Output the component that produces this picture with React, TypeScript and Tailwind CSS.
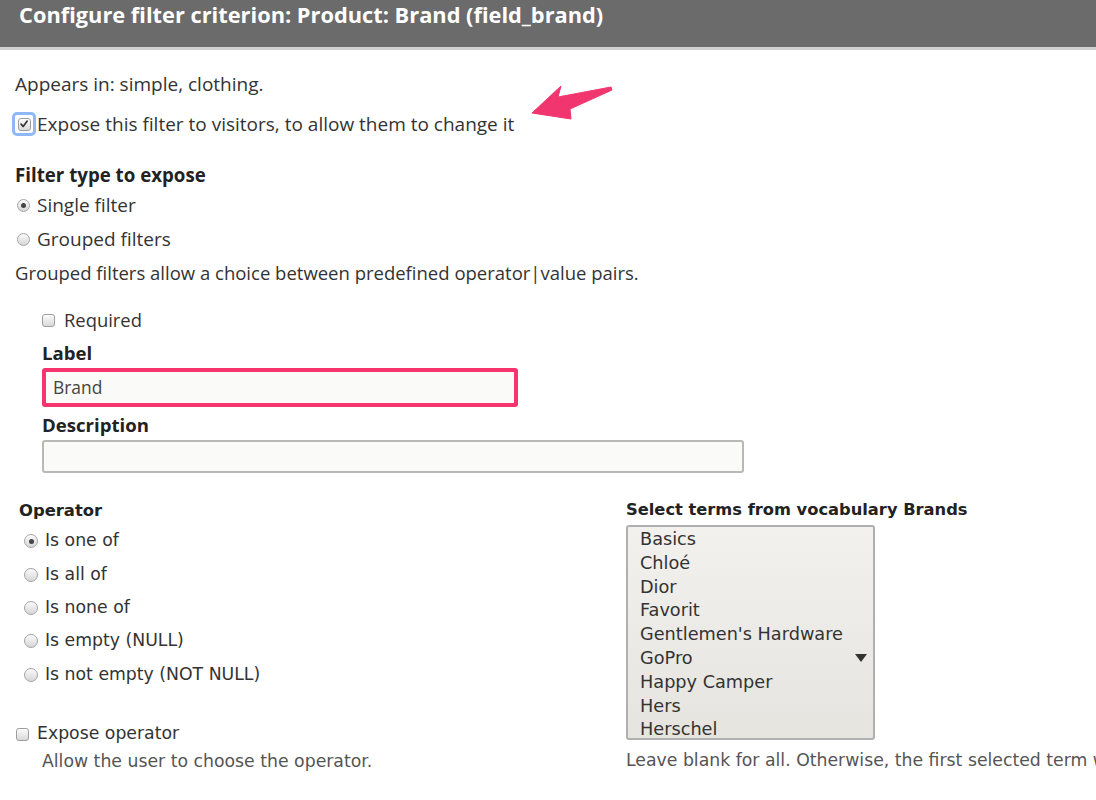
import React from "react";

const top = { fontFamily: '"Open Sans", "Noto Sans", sans-serif' };
const low = { fontFamily: '"DejaVu Sans", "Noto Sans", sans-serif' };

const Checkbox = ({ checked = false }: { checked?: boolean }) => (
  <span className="relative inline-flex h-[13px] w-[13px] shrink-0 items-center justify-center rounded-[3px] border border-[#9d9d9d] bg-gradient-to-b from-[#fbfbfb] to-[#d9d9d9] shadow-[inset_0_1px_0_#fff]">
    {checked && (
      <svg viewBox="0 0 12 12" className="h-[10px] w-[10px]">
        <path d="M2.5 6.2 L5 9 L9.8 2.5" fill="none" stroke="#333" strokeWidth="2" strokeLinecap="round" strokeLinejoin="round" />
      </svg>
    )}
  </span>
);

const Radio = ({ checked = false, big = false }: { checked?: boolean; big?: boolean }) => (
  <span
    className={`inline-flex shrink-0 items-center justify-center rounded-full border border-[#a5a5a5] bg-gradient-to-b from-[#fbfbfb] to-[#d6d6d6] ${
      big ? "h-[14px] w-[14px]" : "h-[13px] w-[13px]"
    }`}
  >
    {checked && <span className="h-[5px] w-[5px] rounded-full bg-[#444]" />}
  </span>
);

const brands = ["Basics", "Chloé", "Dior", "Favorit", "Gentlemen's Hardware", "GoPro", "Happy Camper", "Hers", "Herschel"];

const operators = [
  { label: "Is one of", checked: true, mt: "mt-[6px]" },
  { label: "Is all of", mt: "mt-[10px]" },
  { label: "Is none of", mt: "mt-[9px]" },
  { label: "Is empty (NULL)", mt: "mt-[9px]" },
  { label: "Is not empty (NOT NULL)", mt: "mt-[10px]" },
];

export default function App() {
  return (
    <div className="relative h-[800px] w-[1096px] overflow-hidden bg-white text-[#333]">
      <div className="h-[50px] border-b-[3px] border-[#d0d0d0] bg-[#6b6b6b]">
        <h1 className="px-[19px] text-[21.8px] font-bold leading-[30px] text-white" style={top}>
          Configure filter criterion: Product: Brand (field_brand)
        </h1>
      </div>

      <div className="px-[15px]">
        <div className="mt-[22px] flex h-[24px] items-center text-[19px]" style={top}>
          Appears in: simple, clothing.
        </div>

        <div className="mt-[16px] flex h-[24px] items-center text-[19px]" style={top}>
          <span className="-ml-[3px] mr-[1px] inline-flex h-[24px] w-[24px] items-center justify-center rounded-[5px] border-[3px] border-[#8fb8f4]">
            <Checkbox checked />
          </span>
          Expose this filter to visitors, to allow them to change it
        </div>

        <div className="mt-[27px] flex h-[24px] items-center text-[18.7px] font-bold text-[#222]" style={top}>
          Filter type to expose
        </div>
        <div className="mt-[6px] flex h-[24px] items-center gap-[7px] pl-[2px] text-[19px]" style={top}>
          <Radio checked />
          Single filter
        </div>
        <div className="mt-[10px] flex h-[24px] items-center gap-[7px] pl-[2px] text-[19px]" style={top}>
          <Radio />
          Grouped filters
        </div>
        <div className="mt-[10px] flex h-[24px] items-center text-[18.5px]" style={top}>
          Grouped filters allow a choice between predefined operator|value pairs.
        </div>

        <div className="pl-[27px]" style={top}>
          <div className="mt-[23px] flex h-[24px] items-center gap-[9px] text-[18.4px]">
            <Checkbox />
            Required
          </div>
          <div className="mt-[9px] flex h-[24px] items-center text-[18.6px] font-bold text-[#222]">Label</div>
          <div className="mt-[3px] flex h-[39px] w-[476px] items-center rounded-[3px] border-[4px] border-[#f7346e] bg-[#fafaf8] px-[7px] text-[17.4px] text-[#444]">
            Brand
          </div>
          <div className="mt-[6px] flex h-[24px] items-center text-[18.6px] font-bold text-[#222]">Description</div>
          <div className="mt-[3px] h-[33px] w-[702px] rounded-[3px] border-2 border-[#b8b8b8] bg-[#fafaf8]" />
        </div>

        <div className="flex" style={low}>
          <div className="w-[611px] shrink-0">
            <div className="mt-[26px] flex h-[24px] items-center pl-[4px] text-[16.4px] font-bold text-[#222]">Operator</div>
            {operators.map((o) => (
              <div key={o.label} className={`${o.mt} flex h-[24px] items-center gap-[7px] pl-[9px] text-[17.3px]`}>
                <Radio big checked={o.checked} />
                {o.label}
              </div>
            ))}
            <div className="mt-[35px] flex h-[24px] items-center gap-[8px] pl-[1px] text-[17.3px]">
              <Checkbox />
              Expose operator
            </div>
            <div className="mt-[4px] flex h-[24px] items-center pl-[27px] text-[17.3px] text-[#555]">
              Allow the user to choose the operator.
            </div>
          </div>

          <div className="shrink-0 whitespace-nowrap">
            <div className="mt-[25px] flex h-[24px] items-center text-[16.3px] font-bold text-[#222]">
              Select terms from vocabulary Brands
            </div>
            <div className="relative mt-[3px] h-[215px] w-[249px] rounded-[3px] border-2 border-[#b0b0b0] bg-gradient-to-b from-[#f2f1ee] to-[#e5e4df] pl-[12px] pt-[1px]">
              {brands.map((b) => (
                <div key={b} className="h-[23.8px] text-[17.7px] leading-[23.8px] text-[#333]">
                  {b}
                </div>
              ))}
              <svg viewBox="0 0 12 8" className="absolute right-[6px] top-[127px] h-[8px] w-[12px]">
                <path d="M0 0 H12 L6 8 Z" fill="#333" />
              </svg>
            </div>
            <div className="mt-[9px] flex h-[24px] items-center text-[17.3px] text-[#555]">
              Leave blank for all. Otherwise, the first selected term will be the default.
            </div>
          </div>
        </div>
      </div>

      <svg className="absolute left-[528px] top-[82px] h-[42px] w-[90px]" viewBox="528 82 90 42">
        <path d="M532 113 L561 86 L558 97 L611 87 L612 90 L570 109 L571 119 Z" fill="#f1356f" stroke="#f1356f" strokeWidth="1" strokeLinejoin="round" />
      </svg>
    </div>
  );
}
